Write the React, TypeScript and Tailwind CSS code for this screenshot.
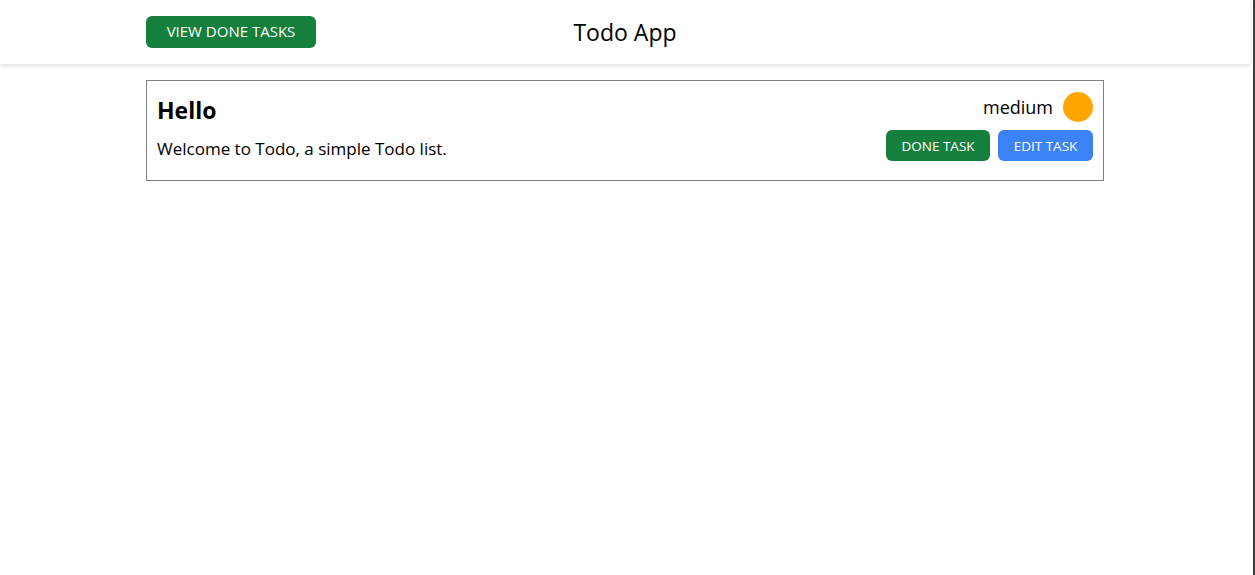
export default function App() {
  return (
    <div className="flex min-h-screen bg-white font-['Open_Sans',sans-serif] text-black">
      <div className="flex-1 pr-[3px]">
        <header className="h-16 bg-white shadow-[0_2px_4px_rgba(0,0,0,0.12)]">
          <div className="mx-auto grid h-full w-[958px] grid-cols-3 items-center">
            <div>
              <button className="mt-[-1px] h-8 w-[170px] rounded-md bg-[#15803d] text-[15px] text-white">
                VIEW DONE TASKS
              </button>
            </div>
            <h1 className="text-center text-[23px] leading-none">Todo App</h1>
            <div />
          </div>
        </header>

        <main className="mx-auto mt-4 w-[958px]">
          <div className="flex items-start justify-between border border-[#808080] pb-[19px] pl-[10px] pr-[10px] pt-[11px]">
            <div className="pt-[4px]">
              <h2 className="text-[23px] font-bold leading-7">Hello</h2>
              <p className="mt-[13px] text-[17px] leading-6">Welcome to Todo, a simple Todo list.</p>
            </div>
            <div className="flex flex-col items-end">
              <div className="flex items-center gap-[10px]">
                <span className="text-[18px]">medium</span>
                <span className="h-[30px] w-[30px] rounded-full bg-[#ffa500]" />
              </div>
              <div className="mt-2 flex gap-2">
                <button className="h-[31px] w-[104px] rounded-md bg-[#15803d] pt-px text-[13.5px] text-white">
                  DONE TASK
                </button>
                <button className="h-[31px] w-[95px] rounded-md bg-[#3b82f6] pt-px text-[13.5px] text-white">
                  EDIT TASK
                </button>
              </div>
            </div>
          </div>
        </main>
      </div>
      <div className="w-[2px] bg-[#3c3c41]" />
    </div>
  );
}
